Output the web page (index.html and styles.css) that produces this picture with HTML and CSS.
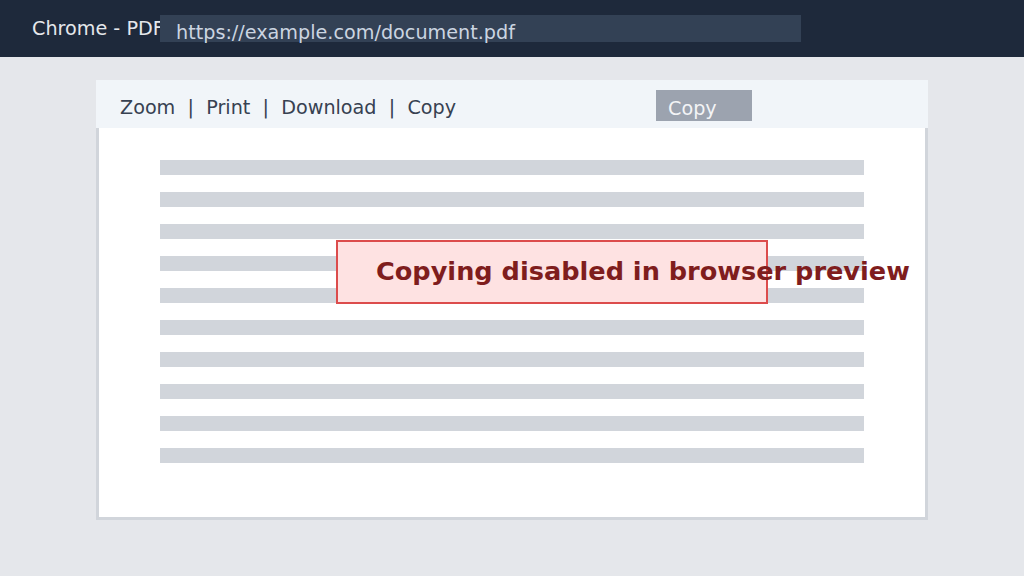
FILE: index.html
```html
<!DOCTYPE html>
<html>
<head>
<meta charset="utf-8">
<link rel="stylesheet" href="styles.css">
</head>
<body>
<header class="topbar">
  <span class="title">Chrome - PDF</span>
  <div class="urlbar">https://example.com/document.pdf</div>
</header>
<main class="stage">
  <section class="viewer">
    <div class="toolbar">
      <span class="tools">Zoom &nbsp;|&nbsp; Print &nbsp;|&nbsp; Download &nbsp;|&nbsp; Copy</span>
      <button class="copy-btn">Copy</button>
    </div>
    <div class="page">
      <div class="line"></div>
      <div class="line"></div>
      <div class="line"></div>
      <div class="line"></div>
      <div class="line"></div>
      <div class="line"></div>
      <div class="line"></div>
      <div class="line"></div>
      <div class="line"></div>
      <div class="line"></div>
      <div class="notice">Copying disabled in browser preview</div>
    </div>
  </section>
</main>
</body>
</html>
```
FILE: styles.css
```css
* { box-sizing: border-box; }
html, body { margin: 0; padding: 0; }
body {
  width: 1024px;
  height: 576px;
  overflow: hidden;
  background: #e5e7eb;
  font-family: "DejaVu Sans", sans-serif;
}
.topbar {
  height: 57px;
  background: #1e293b;
  display: flex;
  align-items: flex-start;
  padding-left: 32px;
}
.title {
  color: #e5e7eb;
  font-size: 19.2px;
  line-height: 20px;
  margin-top: 19px;
  width: 128px;
  white-space: nowrap;
}
.urlbar {
  margin-top: 15px;
  width: 641px;
  height: 27px;
  background: #334155;
  color: #cbd5e1;
  font-size: 19.2px;
  line-height: 20px;
  padding: 8px 0 0 16px;
  white-space: nowrap;
}
.stage {
  padding: 23px 0 0 96px;
}
.viewer {
  width: 832px;
}
.toolbar {
  height: 48px;
  background: #f1f5f9;
  display: flex;
  align-items: flex-start;
  padding-left: 24px;
}
.tools {
  color: #374151;
  font-size: 19.2px;
  line-height: 20px;
  margin-top: 18px;
  white-space: pre;
  width: 536px;
}
.copy-btn {
  margin-top: 10px;
  width: 96px;
  height: 31px;
  border: none;
  background: #9ca3af;
  color: #f3f4f6;
  font-family: "DejaVu Sans", sans-serif;
  font-size: 19.2px;
  line-height: 20px;
  text-align: left;
  padding: 7px 0 0 12px;
}
.page {
  position: relative;
  height: 392px;
  background: #ffffff;
  border: 3px solid #d1d5db;
  border-top: none;
  padding: 32px 0 0 61px;
  display: flex;
  flex-direction: column;
  gap: 17px;
}
.line {
  width: 704px;
  height: 15px;
  background: #d1d5db;
}
.notice {
  position: absolute;
  left: 237px;
  top: 112px;
  width: 432px;
  height: 64px;
  background: #fee2e2;
  border: 2px solid #dc4c4c;
  color: #7f1d1d;
  font-weight: bold;
  font-size: 25.6px;
  line-height: 28px;
  padding: 15px 0 0 38px;
  white-space: nowrap;
}
```
